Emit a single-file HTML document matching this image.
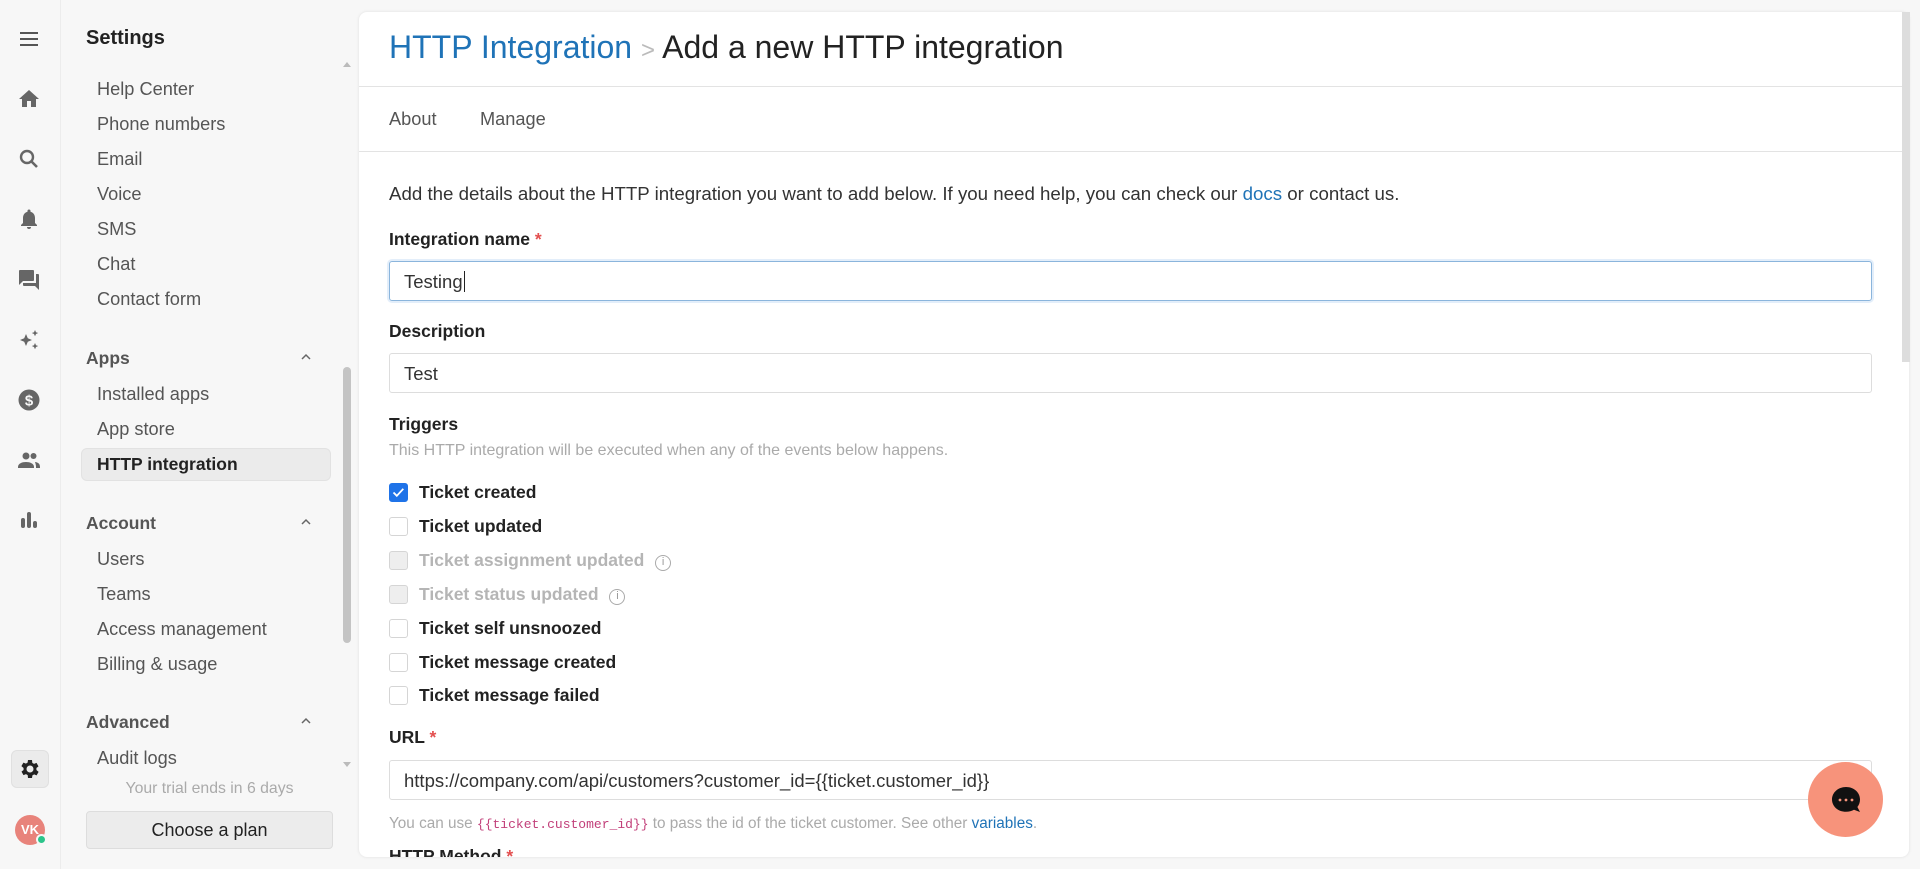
<!DOCTYPE html>
<html><head><meta charset="utf-8"><style>
*{box-sizing:border-box;margin:0;padding:0}
body{width:1920px;height:869px;overflow:hidden;background:#f7f7f7;font-family:"Liberation Sans",sans-serif;position:relative;color:#222}
.abs{position:absolute}
.rail{left:0;top:0;width:61px;height:869px;border-right:1px solid #ececec;background:#f7f7f7}
.ic{position:absolute;left:17px;width:24px;height:24px}
.side .it{position:absolute;left:97px;font-size:18.2px;color:#555;white-space:nowrap}
.side .hd{position:absolute;left:86px;font-size:17.5px;font-weight:bold;color:#555}
.chev{position:absolute;left:301px;width:10px;height:10px}
.card{left:359px;top:12px;width:1550px;height:845px;background:#fff;border-radius:8px;box-shadow:0 0 3px rgba(0,0,0,.1);overflow:hidden}
.card .t{position:absolute;white-space:nowrap}
.lbl{font-size:17.5px;font-weight:bold;color:#222}
.inp{position:absolute;left:30px;width:1483px;height:40px;border:1px solid #ddd;border-radius:3px;font-size:18.5px;padding:9px 14px;color:#333}
.cb{position:absolute;left:30px;width:19px;height:19px;border:1px solid #d5d5d5;border-radius:3px;background:#fff}
.cbl{position:absolute;left:60px;font-size:17.5px;font-weight:bold;color:#222;white-space:nowrap}
.dis{color:#b5b5b5}
</style></head><body>
<div class="abs rail"></div>
<svg class="ic" style="top:27px" viewBox="0 0 24 24"><path d="M3 6h18M3 12h18M3 18h18" stroke="#555" stroke-width="2"/></svg>
<svg class="ic" style="top:87px" viewBox="0 0 24 24"><path d="M10 20v-6h4v6h5v-8h3L12 3 2 12h3v8z" fill="#666"/></svg>
<svg class="ic" style="top:147px" viewBox="0 0 24 24"><circle cx="10" cy="10" r="6" fill="none" stroke="#666" stroke-width="2.4"/><path d="M14.5 14.5 20 20" stroke="#666" stroke-width="2.6"/></svg>
<svg class="ic" style="top:207px" viewBox="0 0 24 24"><path d="M12 22a2 2 0 0 0 2-2h-4a2 2 0 0 0 2 2zm6-6v-5c0-3.1-1.6-5.6-4.5-6.3V4a1.5 1.5 0 0 0-3 0v.7C7.6 5.4 6 7.9 6 11v5l-2 2v1h16v-1z" fill="#666"/></svg>
<svg class="ic" style="top:268px" viewBox="0 0 24 24"><path d="M21 6h-2v9H6v2c0 .6.4 1 1 1h11l4 4V7c0-.6-.4-1-1-1zm-4 6V3c0-.6-.4-1-1-1H3c-.6 0-1 .4-1 1v14l4-4h10c.6 0 1-.4 1-1z" fill="#666"/></svg>
<svg class="ic" style="top:328px" viewBox="0 0 24 24"><path d="M9 6l1.8 4.2L15 12l-4.2 1.8L9 18l-1.8-4.2L3 12l4.2-1.8zM18 2l1 2.2 2.2.8-2.2 1-1 2.2-1-2.2-2.2-1 2.2-.8zM18 15l1 2.2 2.2.8-2.2 1-1 2.2-1-2.2-2.2-1 2.2-.8z" fill="#666"/></svg>
<svg class="ic" style="top:388px" viewBox="0 0 24 24"><circle cx="12" cy="12" r="10.5" fill="#666"/><text x="12" y="17.5" font-size="15" font-family="Liberation Sans" font-weight="bold" fill="#f7f7f7" text-anchor="middle">$</text></svg>
<svg class="ic" style="top:448px" viewBox="0 0 24 24"><circle cx="9" cy="8" r="3.5" fill="#666"/><circle cx="16.5" cy="8" r="3" fill="#666"/><path d="M1 19c0-3.5 4-5 8-5s8 1.5 8 5v1H1zM18 14c3 .3 5 1.7 5 5v1h-4v-1c0-2-.5-3.5-1-5z" fill="#666"/></svg>
<svg class="ic" style="top:508px" viewBox="0 0 24 24"><rect x="4" y="10" width="4" height="10" rx="2" fill="#666"/><rect x="10" y="4" width="4" height="16" rx="2" fill="#666"/><rect x="16" y="13" width="4" height="7" rx="2" fill="#666"/></svg>
<div class="abs" style="left:11px;top:750px;width:38px;height:38px;border-radius:6px;background:#ebebeb;border:1px solid #e0e0e0"></div>
<svg class="ic" style="left:18px;top:757px" viewBox="0 0 24 24"><path d="M19.4 13a7.5 7.5 0 0 0 0-2l2.1-1.6-2-3.5-2.5 1a7 7 0 0 0-1.7-1L15 3h-4l-.4 2.6a7 7 0 0 0-1.7 1l-2.5-1-2 3.5L6.6 11a7.5 7.5 0 0 0 0 2l-2.1 1.6 2 3.5 2.5-1a7 7 0 0 0 1.7 1L11 21h4l.4-2.6a7 7 0 0 0 1.7-1l2.5 1 2-3.5zM13 15.5a3.5 3.5 0 1 1 0-7 3.5 3.5 0 0 1 0 7z" fill="#222" transform="translate(-1 0)"/></svg>
<div class="abs" style="left:15px;top:815px;width:30px;height:30px;border-radius:50%;background:#e8837b;color:#fff;font-size:13px;font-weight:bold;text-align:center;line-height:30px">VK</div>
<div class="abs" style="left:36px;top:834px;width:11px;height:11px;border-radius:50%;background:#2bc48a;border:2px solid #f7f7f7"></div>

<div class="side">
<div class="abs" style="left:86px;top:27px;font-size:20px;font-weight:bold;color:#222">Settings</div>
<div class="it" style="top:79px">Help Center</div>
<div class="it" style="top:114px">Phone numbers</div>
<div class="it" style="top:149px">Email</div>
<div class="it" style="top:184px">Voice</div>
<div class="it" style="top:219px">SMS</div>
<div class="it" style="top:254px">Chat</div>
<div class="it" style="top:289px">Contact form</div>
<div class="hd" style="top:348px">Apps</div>
<div class="it" style="top:384px">Installed apps</div>
<div class="it" style="top:419px">App store</div>
<div class="abs" style="left:81px;top:448px;width:250px;height:33px;border-radius:6px;background:#ebebeb;border:1px solid #e2e2e2"></div>
<div class="it" style="top:454px;color:#222;font-weight:bold;font-size:17.5px">HTTP integration</div>
<div class="hd" style="top:513px">Account</div>
<div class="it" style="top:549px">Users</div>
<div class="it" style="top:584px">Teams</div>
<div class="it" style="top:619px">Access management</div>
<div class="it" style="top:654px">Billing &amp; usage</div>
<div class="hd" style="top:712px">Advanced</div>
<div class="it" style="top:748px">Audit logs</div>
<svg class="chev" style="top:352px" viewBox="0 0 10 10"><path d="M1 7l4-4 4 4" fill="none" stroke="#666" stroke-width="1.5"/></svg>
<svg class="chev" style="top:517px" viewBox="0 0 10 10"><path d="M1 7l4-4 4 4" fill="none" stroke="#666" stroke-width="1.5"/></svg>
<svg class="chev" style="top:716px" viewBox="0 0 10 10"><path d="M1 7l4-4 4 4" fill="none" stroke="#666" stroke-width="1.5"/></svg>
<div class="abs" style="left:343px;top:367px;width:8px;height:276px;border-radius:4px;background:#c4c4c4"></div>
<div class="abs" style="left:343px;top:62px;width:0;height:0;border-left:4px solid transparent;border-right:4px solid transparent;border-bottom:5px solid #bbb"></div>
<div class="abs" style="left:343px;top:762px;width:0;height:0;border-left:4px solid transparent;border-right:4px solid transparent;border-top:5px solid #bbb"></div>
<div class="abs" style="left:86px;top:780px;width:247px;text-align:center;font-size:15.8px;color:#aaa">Your trial ends in 6 days</div>
<div class="abs" style="left:86px;top:811px;width:247px;height:38px;border:1px solid #ddd;border-radius:4px;background:#ececec;text-align:center;line-height:36px;font-size:18px;color:#222">Choose a plan</div>
</div>

<div class="abs card">
<div class="t" style="left:30px;top:17px;font-size:32px;color:#1f73b7">HTTP Integration <span style="color:#bbb;font-size:24px">&gt;</span> <span style="color:#222">Add a new HTTP integration</span></div>
<div class="abs" style="left:0;top:74px;width:100%;height:1px;background:#e3e3e3"></div>
<div class="t" style="left:30px;top:97px;font-size:18.2px;color:#555">About</div>
<div class="t" style="left:121px;top:97px;font-size:18.2px;color:#555">Manage</div>
<div class="abs" style="left:0;top:139px;width:100%;height:1px;background:#e3e3e3"></div>
<div class="t" style="left:30px;top:171px;font-size:18.7px;color:#333">Add the details about the HTTP integration you want to add below. If you need help, you can check our <span style="color:#1f73b7">docs</span> or contact us.</div>
<div class="t lbl" style="left:30px;top:217px">Integration name <span style="color:#e34f4f">*</span></div>
<div class="inp" style="top:249px;border-color:#8bb5dc;box-shadow:0 0 0 2px #e3eefa">Testing<span style="border-left:1px solid #222;margin-left:1px"></span></div>
<div class="t lbl" style="left:30px;top:309px">Description</div>
<div class="inp" style="top:341px">Test</div>
<div class="t lbl" style="left:30px;top:402px">Triggers</div>
<div class="t" style="left:30px;top:430px;font-size:16px;color:#aaa">This HTTP integration will be executed when any of the events below happens.</div>
<div class="cb" style="top:471px;background:#1f73e8;border-color:#1f73e8"><svg width="17" height="17" viewBox="0 0 17 17" style="position:absolute;left:0;top:0"><path d="M3.5 8.5l3.3 3.3 6.5-7" fill="none" stroke="#fff" stroke-width="1.8"/></svg></div>
<div class="cbl" style="top:470px">Ticket created</div>
<div class="cb" style="top:505px"></div><div class="cbl" style="top:504px">Ticket updated</div>
<div class="cb" style="top:539px;background:#eee"></div><div class="cbl dis" style="top:538px">Ticket assignment updated <span style="display:inline-block;width:16px;height:16px;border:1.5px solid #aaa;border-radius:50%;font-size:11px;text-align:center;line-height:13px;color:#999;font-weight:normal;margin-left:6px;vertical-align:1px">i</span></div>
<div class="cb" style="top:573px;background:#eee"></div><div class="cbl dis" style="top:572px">Ticket status updated <span style="display:inline-block;width:16px;height:16px;border:1.5px solid #aaa;border-radius:50%;font-size:11px;text-align:center;line-height:13px;color:#999;font-weight:normal;margin-left:6px;vertical-align:1px">i</span></div>
<div class="cb" style="top:607px"></div><div class="cbl" style="top:606px">Ticket self unsnoozed</div>
<div class="cb" style="top:641px"></div><div class="cbl" style="top:640px">Ticket message created</div>
<div class="cb" style="top:674px"></div><div class="cbl" style="top:673px">Ticket message failed</div>
<div class="t lbl" style="left:30px;top:715px">URL <span style="color:#e34f4f">*</span></div>
<div class="inp" style="top:748px">https://company.com/api/customers?customer_id={{ticket.customer_id}}</div>
<div class="t" style="left:30px;top:803px;font-size:15.3px;color:#aaa">You can use <span style="font-family:'Liberation Mono',monospace;color:#c2407a;font-size:13px">{{ticket.customer_id}}</span> to pass the id of the ticket customer. See other <span style="color:#1f73b7">variables</span>.</div>
<div class="t lbl" style="left:30px;top:834px">HTTP Method <span style="color:#e34f4f">*</span></div>
</div>
<div class="abs" style="left:1902px;top:12px;width:8px;height:350px;background:#ddd"></div>
<div class="abs" style="left:1808px;top:762px;width:75px;height:75px;border-radius:50%;background:#f7937b"></div>
<svg class="abs" style="left:1826px;top:781px" width="40" height="40" viewBox="0 0 40 40"><path d="M20 6c8 0 14 5.5 14 12.5 0 3-1 5.5-2.6 7.5L34 31l-6-2.2c-2.4 1.3-5 2-8 2-8 0-14-5.5-14-12.3S12 6 20 6z" fill="#111"/><circle cx="14" cy="19" r="1.4" fill="#f7937b"/><circle cx="20" cy="19" r="1.4" fill="#f7937b"/><circle cx="26" cy="19" r="1.4" fill="#f7937b"/></svg>
</body></html>
